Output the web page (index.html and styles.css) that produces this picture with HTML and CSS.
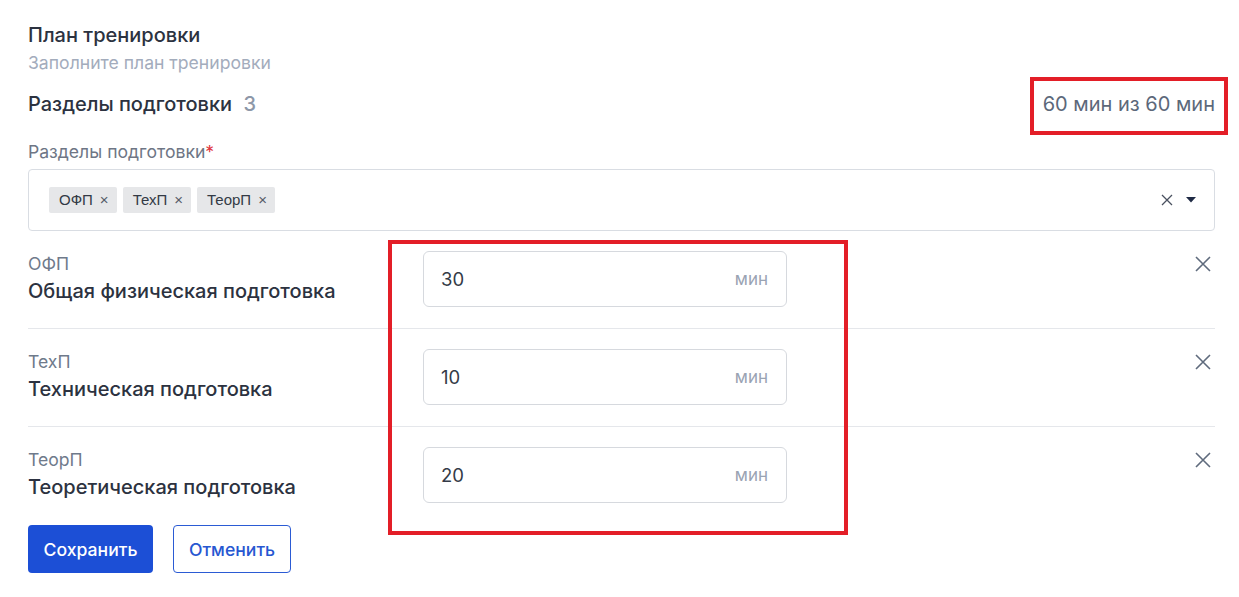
FILE: index.html
```html
<!DOCTYPE html>
<html>
	<head>
		<meta charset="UTF-8">
		<title>План тренировки</title>
		<link rel="stylesheet" href="styles.css">
	</head>
	<body>
		<div id="plan">
			<h2 class="title">План тренировки</h2>
			<p class="subtitle">Заполните план тренировки</p>
			<div class="head">
				<span class="head-name">Разделы подготовки <span class="count">3</span></span>
				<span class="total">60 мин из 60 мин</span>
			</div>
			<label class="field-label">Разделы подготовки<span class="req">*</span></label>
			<div class="select">
				<div class="tags">
					<span class="tag">ОФП<i>×</i></span>
					<span class="tag">ТехП<i>×</i></span>
					<span class="tag">ТеорП<i>×</i></span>
				</div>
				<div class="select-tools">
					<svg width="14" height="14" viewBox="0 0 14 14"><path d="M2 2L12 12M12 2L2 12" stroke="#4a5160" stroke-width="1.3" fill="none"/></svg>
					<svg width="10" height="6" viewBox="0 0 10 6"><path d="M0 0H10L5 5.5Z" fill="#1f2a44"/></svg>
				</div>
			</div>
			<ul class="rows">
				<li class="row">
					<div class="row-text">
						<div class="code">ОФП</div>
						<div class="name">Общая физическая подготовка</div>
					</div>
					<div class="minutes"><span>30</span><span class="unit">мин</span></div>
					<a class="remove" href=""><svg width="18" height="18" viewBox="0 0 18 18"><path d="M2 2L16 16M16 2L2 16" stroke="#5f6b7d" stroke-width="1.6" fill="none"/></svg></a>
				</li>
				<li class="row">
					<div class="row-text">
						<div class="code">ТехП</div>
						<div class="name">Техническая подготовка</div>
					</div>
					<div class="minutes"><span>10</span><span class="unit">мин</span></div>
					<a class="remove" href=""><svg width="18" height="18" viewBox="0 0 18 18"><path d="M2 2L16 16M16 2L2 16" stroke="#5f6b7d" stroke-width="1.6" fill="none"/></svg></a>
				</li>
				<li class="row">
					<div class="row-text">
						<div class="code">ТеорП</div>
						<div class="name">Теоретическая подготовка</div>
					</div>
					<div class="minutes"><span>20</span><span class="unit">мин</span></div>
					<a class="remove" href=""><svg width="18" height="18" viewBox="0 0 18 18"><path d="M2 2L16 16M16 2L2 16" stroke="#5f6b7d" stroke-width="1.6" fill="none"/></svg></a>
				</li>
			</ul>
			<div class="buttons">
				<button class="btn save">Сохранить</button>
				<button class="btn cancel">Отменить</button>
			</div>
		</div>
		<div class="mark mark-total"></div>
		<div class="mark mark-minutes"></div>
	</body>
</html>
```

FILE: styles.css
```css
* {
	margin: 0;
	padding: 0;
	box-sizing: border-box;
}
body {
	font-family: Inter, "Noto Sans", sans-serif;
	color: #2c3240;
	background: #fff;
}
#plan {
	padding: 22px 24px 0 28px;
}
.title {
	font-size: 20px;
	line-height: 26px;
	font-weight: 500;
}
.subtitle {
	margin-top: 4px;
	font-size: 17.6px;
	line-height: 22px;
	color: #a3acbc;
}
.head {
	margin-top: 17px;
	display: flex;
	justify-content: space-between;
	font-size: 20px;
	line-height: 26px;
	font-weight: 500;
}
.count {
	margin-left: 6px;
	color: #8d97a8;
}
.total {
	font-weight: 400;
	color: #5c687a;
}
.field-label {
	display: block;
	margin-top: 24px;
	font-size: 17.6px;
	line-height: 22px;
	color: #6e7685;
}
.req {
	color: #e0343c;
}
.select {
	margin-top: 6px;
	height: 62px;
	border: 1px solid #d9dde3;
	border-radius: 4px;
	display: flex;
	align-items: center;
	justify-content: space-between;
	padding: 0 18px 0 20px;
}
.tags {
	display: flex;
	gap: 6px;
}
.tag {
	height: 26px;
	line-height: 26px;
	padding: 0 8px 0 10px;
	background: #e6e7e9;
	border-radius: 2px;
	font-family: "Liberation Sans", Arial, sans-serif;
	font-size: 15px;
	color: #333a45;
}
.tag i {
	font-style: normal;
	margin-left: 7px;
	color: #555c68;
}
.select-tools {
	display: flex;
	align-items: center;
	gap: 12px;
}
.rows {
	list-style: none;
}
.row {
	display: grid;
	grid-template-columns: 395px 364px 1fr;
	align-items: start;
	padding: 20px 0;
	border-bottom: 1px solid #e5e7eb;
	height: 98px;
}
.row:last-child {
	border-bottom: none;
}
.row-text {
	padding-top: 2px;
}
.code {
	font-size: 17.6px;
	line-height: 22px;
	color: #6f7a8b;
}
.name {
	margin-top: 3px;
	font-size: 20px;
	line-height: 26px;
	font-weight: 500;
}
.minutes {
	height: 56px;
	border: 1px solid #d6d9de;
	border-radius: 6px;
	display: flex;
	align-items: center;
	justify-content: space-between;
	padding: 0 18px 0 17px;
	font-size: 18.5px;
	color: #343b47;
}
.unit {
	font-size: 17px;
	color: #9aa3b3;
}
.remove {
	justify-self: end;
	margin-top: 4px;
	margin-right: 3px;
	display: block;
	line-height: 0;
}
.buttons {
	display: flex;
	gap: 20px;
}
.btn {
	height: 48px;
	border-radius: 4px;
	font-family: Inter, "Noto Sans", sans-serif;
	font-size: 17.6px;
	font-weight: 500;
	cursor: pointer;
}
.save {
	width: 125px;
	background: #1c4fd6;
	color: #fff;
	border: none;
}
.cancel {
	width: 118px;
	background: #fff;
	color: #2757d1;
	border: 1px solid #2b5bd4;
}
.mark {
	position: absolute;
	border: 4px solid #e31e27;
}
.mark-total {
	left: 1030px;
	top: 77px;
	width: 198px;
	height: 58px;
}
.mark-minutes {
	left: 388px;
	top: 240px;
	width: 460px;
	height: 295px;
}
```
